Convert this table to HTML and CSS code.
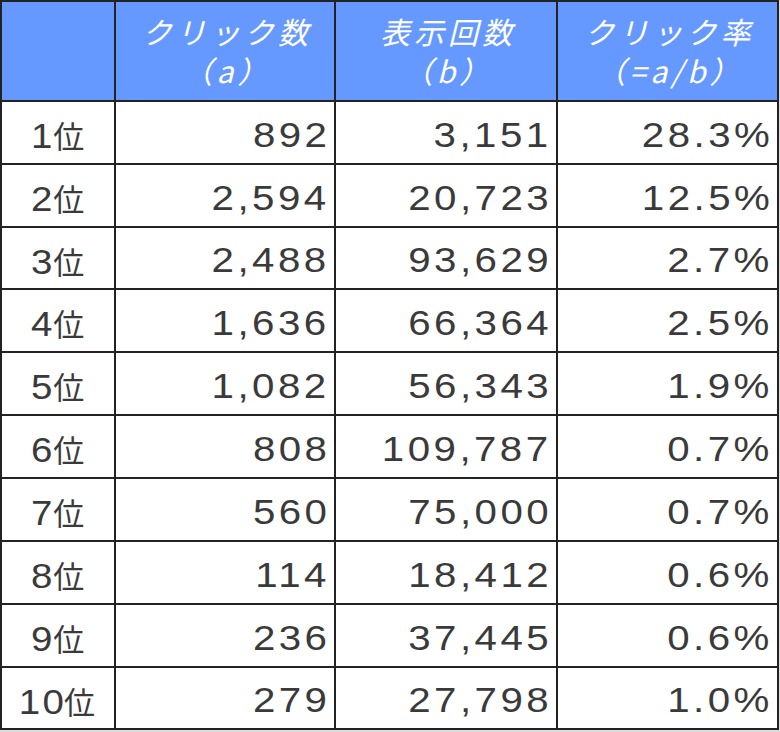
FILE: index.html
```html
<!DOCTYPE html>
<html lang="ja">
<head>
<meta charset="utf-8">
<link rel="stylesheet" href="styles.css">
</head>
<body>
<table class="stats">
  <colgroup>
    <col class="c-rank"><col class="c-num"><col class="c-num2"><col class="c-num3">
  </colgroup>
  <thead>
    <tr>
      <th></th>
      <th><span class="hl">クリック数</span><span class="hl">（a）</span></th>
      <th><span class="hl">表示回数</span><span class="hl">（b）</span></th>
      <th><span class="hl">クリック率</span><span class="hl">（=a/b）</span></th>
    </tr>
  </thead>
  <tbody>
    <tr><td class="rank"><span class="d">1</span><span class="i">位</span></td><td><span class="n">892</span></td><td><span class="n">3,151</span></td><td><span class="n">28.3%</span></td></tr>
    <tr><td class="rank"><span class="d">2</span><span class="i">位</span></td><td><span class="n">2,594</span></td><td><span class="n">20,723</span></td><td><span class="n">12.5%</span></td></tr>
    <tr class="short"><td class="rank"><span class="d">3</span><span class="i">位</span></td><td><span class="n">2,488</span></td><td><span class="n">93,629</span></td><td><span class="n">2.7%</span></td></tr>
    <tr><td class="rank"><span class="d">4</span><span class="i">位</span></td><td><span class="n">1,636</span></td><td><span class="n">66,364</span></td><td><span class="n">2.5%</span></td></tr>
    <tr><td class="rank"><span class="d">5</span><span class="i">位</span></td><td><span class="n">1,082</span></td><td><span class="n">56,343</span></td><td><span class="n">1.9%</span></td></tr>
    <tr><td class="rank"><span class="d">6</span><span class="i">位</span></td><td><span class="n">808</span></td><td><span class="n">109,787</span></td><td><span class="n">0.7%</span></td></tr>
    <tr><td class="rank"><span class="d">7</span><span class="i">位</span></td><td><span class="n">560</span></td><td><span class="n">75,000</span></td><td><span class="n">0.7%</span></td></tr>
    <tr><td class="rank"><span class="d">8</span><span class="i">位</span></td><td><span class="n">114</span></td><td><span class="n">18,412</span></td><td><span class="n">0.6%</span></td></tr>
    <tr><td class="rank"><span class="d">9</span><span class="i">位</span></td><td><span class="n">236</span></td><td><span class="n">37,445</span></td><td><span class="n">0.6%</span></td></tr>
    <tr class="short"><td class="rank"><span class="d">10</span><span class="i">位</span></td><td><span class="n">279</span></td><td><span class="n">27,798</span></td><td><span class="n">1.0%</span></td></tr>
  </tbody>
</table>
</body>
</html>
```
FILE: styles.css
```css
html, body {
  margin: 0;
  padding: 0;
  background: #dcdcdc;
}
.stats {
  border-collapse: collapse;
  table-layout: fixed;
  width: 777px;
  background: #ffffff;
  font-family: "Liberation Sans", "Noto Sans CJK JP", sans-serif;
  color: #3a3a3a;
}
.c-rank { width: 114px; }
.c-num { width: 220px; }
.c-num2 { width: 222px; }
.c-num3 { width: 221px; }
.stats th, .stats td {
  border: 2px solid #222222;
  padding: 0;
}
.stats thead tr { height: 100px; }
.stats th {
  background: #6699ff;
  color: #ffffff;
  font-family: "Noto Sans CJK JP", sans-serif;
  font-weight: normal;
  font-style: italic;
  font-size: 30px;
  line-height: 39px;
  letter-spacing: 4px;
  text-align: center;
  padding: 0 0 0 4px;
}
.hl { display: block; }
.stats tbody tr { height: 63px; }
.stats tbody tr.short { height: 62px; }
.stats td {
  text-align: right;
  font-size: 35px;
  padding-right: 4px;
  padding-top: 4px;
}
.n {
  display: inline-block;
  letter-spacing: 3px;
  transform: scaleX(1.15);
  transform-origin: right center;
}
.stats td.rank {
  text-align: center;
  padding-right: 0;
}
.d {
  display: inline-block;
  letter-spacing: 2px;
  transform: scaleX(1.1);
}
.i {
  font-family: "Noto Sans CJK JP", sans-serif;
  font-size: 31px;
}
```
